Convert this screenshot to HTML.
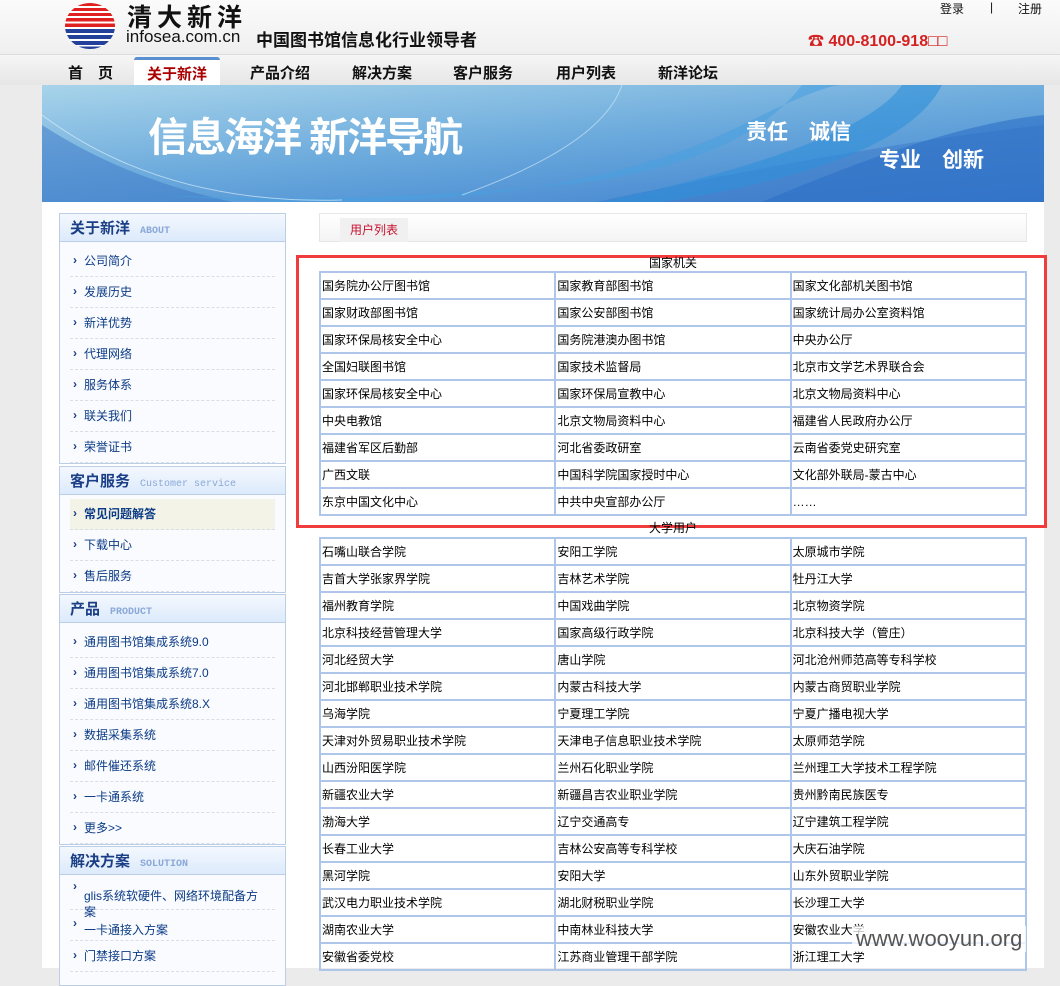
<!DOCTYPE html>
<html><head><meta charset="utf-8">
<style>
*{margin:0;padding:0;box-sizing:border-box}
body{width:1060px;height:968px;overflow:hidden;background:#ebebeb;font-family:"Liberation Sans","Noto Sans CJK SC",sans-serif;font-size:12px;position:relative}
.top{position:absolute;left:0;top:0;width:1060px;height:55px;background:linear-gradient(#fbfbfb,#efefef);border-bottom:1px solid #dcdcdc}
.nav{position:absolute;left:0;top:55px;width:1060px;height:30px;background:linear-gradient(#f6f6f6,#e6e6e6)}
.nav span{position:absolute;top:7px;font-size:15px;color:#111;font-weight:bold}
.nav .on{top:2px;height:28px;width:86px;background:#fff;border-top:3px solid #5a8fd0;border-radius:3px 3px 0 0;color:#a00;text-align:center;padding-top:3px;left:134px}
.banner{position:absolute;left:42px;top:85px;width:1002px;height:117px;background:linear-gradient(175deg,#a8d4ea 0%,#6aa9dc 50%,#3d7fcf 100%);overflow:hidden}
.wrap{position:absolute;left:42px;top:202px;width:1002px;height:766px;background:#fff}
.side{position:absolute;left:59px;width:227px;border:1px solid #bccde6;background:#f9fbfe}
.side h3{height:28px;background:linear-gradient(#f4f8fe,#dceafb);border-bottom:1px solid #bccde6;font-size:15px;color:#1b3f86;font-weight:bold;padding:3px 0 0 10px}
.side h3 i{font-style:normal;font-family:"Liberation Mono",monospace;font-size:10px;color:#8aa8d8;font-weight:bold;margin-left:10px}
.side ul{list-style:none;padding:4px 10px 0 10px}
.side li{height:31px;border-bottom:1px dashed #d8dde6;line-height:30px;padding-left:14px;color:#0c3b86;font-size:12px;position:relative}
.side li:before{content:"›";position:absolute;left:3px;top:-1px;font-weight:bold;color:#1b3f86}
table{border-collapse:collapse;position:absolute;left:319px;width:708px;table-layout:fixed}
td{border:2px solid #adc6ea;height:27px;padding:0 1px;font-size:12px;color:#000;white-space:nowrap;overflow:hidden}
.tt{position:absolute;left:319px;width:708px;text-align:center;font-size:12px;color:#000}
</style></head><body>
<div class="top">
 <svg style="position:absolute;left:64px;top:2px" width="52" height="48" viewBox="0 0 52 48">
  <defs><clipPath id="c"><ellipse cx="26" cy="24" rx="25" ry="23"/></clipPath></defs>
  <g clip-path="url(#c)">
   <rect x="0" y="0" width="52" height="48" fill="#fff"/>
   <rect x="0" y="1" width="52" height="3" fill="#e02020"/><rect x="0" y="6" width="52" height="3" fill="#e02020"/><rect x="0" y="11" width="52" height="3" fill="#e02020"/><rect x="0" y="16" width="52" height="3.5" fill="#e02020"/><rect x="0" y="21.5" width="52" height="3.5" fill="#e02020"/>
   <rect x="0" y="27" width="52" height="4" fill="#23409a"/><rect x="0" y="33" width="52" height="4" fill="#23409a"/><rect x="0" y="39" width="52" height="4" fill="#23409a"/><rect x="0" y="44.5" width="52" height="4" fill="#23409a"/>
  </g>
 </svg>
 <div style="position:absolute;left:127px;top:-2px;font-size:25px;letter-spacing:5px;color:#111;font-weight:bold">清大新洋</div>
 <div style="position:absolute;left:126px;top:27px;font-size:17px;color:#111">infosea.com.cn</div>
 <div style="position:absolute;left:256px;top:26px;font-size:17px;color:#111;font-weight:bold">中国图书馆信息化行业领导者</div>
 <div style="position:absolute;left:940px;top:0px;font-size:12px;color:#111">登录</div>
 <div style="position:absolute;left:990px;top:0px;font-size:12px;color:#111">|</div>
 <div style="position:absolute;left:1018px;top:0px;font-size:12px;color:#111">注册</div>
 <div style="position:absolute;left:808px;top:27px;font-size:16px;color:#d42020;font-weight:bold">☎ 400-8100-918□□</div>
</div>
<div class="nav">
 <span style="left:68px">首　页</span><span class="on">关于新洋</span><span style="left:250px">产品介绍</span><span style="left:352px">解决方案</span><span style="left:453px">客户服务</span><span style="left:556px">用户列表</span><span style="left:658px">新洋论坛</span>
</div>
<div class="banner">
 <svg width="1002" height="117" style="position:absolute;left:0;top:0">
  <path d="M0,40 Q200,170 540,120 Q820,60 1002,40 L1002,117 L0,117Z" fill="#3b78c8" opacity=".5"/>
  <path d="M120,110 Q500,140 700,40 Q780,0 800,0 L760,0 Q700,80 520,100 Q300,120 120,110Z" fill="#4aa0e0" opacity=".6"/>
  <path d="M560,117 Q820,60 860,0 L900,0 Q860,80 620,117Z" fill="#2e8fd8" opacity=".6"/>
  <path d="M720,117 Q900,40 1002,30 L1002,117Z" fill="#2d6fc6" opacity=".6"/>
  <path d="M0,30 Q120,120 300,115" stroke="#d8ecf8" fill="none" opacity=".7"/>
  <path d="M580,0 Q560,60 420,110" stroke="#d8ecf8" fill="none" opacity=".6"/>
 </svg>
 <div style="position:absolute;left:106px;top:20px;font-size:40px;color:#fff;letter-spacing:-2px;font-weight:bold">信息海洋 新洋导航</div>
 <div style="position:absolute;left:704px;top:31px;font-size:21px;color:#fff;font-weight:bold">责任　诚信</div>
 <div style="position:absolute;left:837px;top:59px;font-size:21px;color:#fff;font-weight:bold">专业　创新</div>
</div>
<div class="wrap"></div>
<div class="side" style="top:213px"><h3>关于新洋<i>ABOUT</i></h3><ul><li>公司简介</li><li>发展历史</li><li>新洋优势</li><li>代理网络</li><li>服务体系</li><li>联关我们</li><li>荣誉证书</li></ul></div>
<div class="side" style="top:466px"><h3>客户服务<i style="font-weight:normal">Customer service</i></h3><ul><li style="background:#f3f3e8;font-weight:bold">常见问题解答</li><li>下载中心</li><li>售后服务</li></ul></div>
<div class="side" style="top:594px"><h3>产品<i>PRODUCT</i></h3><ul><li>通用图书馆集成系统9.0</li><li>通用图书馆集成系统7.0</li><li>通用图书馆集成系统8.X</li><li>数据采集系统</li><li>邮件催还系统</li><li>一卡通系统</li><li>更多&gt;&gt;</li></ul></div>
<div class="side" style="top:846px;height:140px"><h3>解决方案<i>SOLUTION</i></h3><ul><li style="line-height:16px;padding-top:9px;padding-right:8px;height:31px;overflow:visible">glis系统软硬件、网络环境配备方案</li><li style="line-height:28px;padding-top:6px">一卡通接入方案</li><li>门禁接口方案</li></ul></div>
<div style="position:absolute;left:319px;top:213px;width:708px;height:29px;border:1px solid #e6e6e6;background:linear-gradient(#fff,#f4f4f4)">
 <div style="position:absolute;left:20px;top:4px;width:68px;height:24px;background:#f0f0f0;color:#c8102e;text-align:center;line-height:24px">用户列表</div>
</div>
<div style="position:absolute;left:296px;top:255px;width:751px;height:273px;border:3px solid #f03c3c"></div>
<div class="tt" style="top:254px">国家机关</div>
<table style="top:271px"><tr><td>国务院办公厅图书馆</td><td>国家教育部图书馆</td><td>国家文化部机关图书馆</td></tr><tr><td>国家财政部图书馆</td><td>国家公安部图书馆</td><td>国家统计局办公室资料馆</td></tr><tr><td>国家环保局核安全中心</td><td>国务院港澳办图书馆</td><td>中央办公厅</td></tr><tr><td>全国妇联图书馆</td><td>国家技术监督局</td><td>北京市文学艺术界联合会</td></tr><tr><td>国家环保局核安全中心</td><td>国家环保局宣教中心</td><td>北京文物局资料中心</td></tr><tr><td>中央电教馆</td><td>北京文物局资料中心</td><td>福建省人民政府办公厅</td></tr><tr><td>福建省军区后勤部</td><td>河北省委政研室</td><td>云南省委党史研究室</td></tr><tr><td>广西文联</td><td>中国科学院国家授时中心</td><td>文化部外联局-蒙古中心</td></tr><tr><td>东京中国文化中心</td><td>中共中央宣部办公厅</td><td>……</td></tr></table>
<div class="tt" style="top:519px">大学用户</div>
<table style="top:537px"><tr><td>石嘴山联合学院</td><td>安阳工学院</td><td>太原城市学院</td></tr><tr><td>吉首大学张家界学院</td><td>吉林艺术学院</td><td>牡丹江大学</td></tr><tr><td>福州教育学院</td><td>中国戏曲学院</td><td>北京物资学院</td></tr><tr><td>北京科技经营管理大学</td><td>国家高级行政学院</td><td>北京科技大学（管庄）</td></tr><tr><td>河北经贸大学</td><td>唐山学院</td><td>河北沧州师范高等专科学校</td></tr><tr><td>河北邯郸职业技术学院</td><td>内蒙古科技大学</td><td>内蒙古商贸职业学院</td></tr><tr><td>乌海学院</td><td>宁夏理工学院</td><td>宁夏广播电视大学</td></tr><tr><td>天津对外贸易职业技术学院</td><td>天津电子信息职业技术学院</td><td>太原师范学院</td></tr><tr><td>山西汾阳医学院</td><td>兰州石化职业学院</td><td>兰州理工大学技术工程学院</td></tr><tr><td>新疆农业大学</td><td>新疆昌吉农业职业学院</td><td>贵州黔南民族医专</td></tr><tr><td>渤海大学</td><td>辽宁交通高专</td><td>辽宁建筑工程学院</td></tr><tr><td>长春工业大学</td><td>吉林公安高等专科学校</td><td>大庆石油学院</td></tr><tr><td>黑河学院</td><td>安阳大学</td><td>山东外贸职业学院</td></tr><tr><td>武汉电力职业技术学院</td><td>湖北财税职业学院</td><td>长沙理工大学</td></tr><tr><td>湖南农业大学</td><td>中南林业科技大学</td><td>安徽农业大学</td></tr><tr><td>安徽省委党校</td><td>江苏商业管理干部学院</td><td>浙江理工大学</td></tr></table>
<div style="position:absolute;left:852px;top:926px;font-size:22px;color:#555;background:rgba(255,255,255,.75);padding:0 4px">www.wooyun.org</div>
</body></html>
